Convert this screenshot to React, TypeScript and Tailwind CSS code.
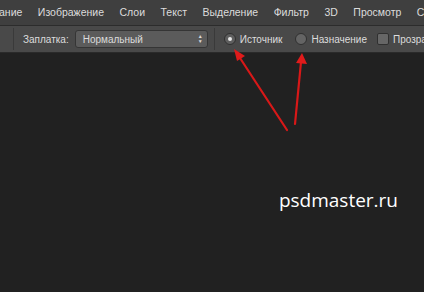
import React from 'react';

const menu = ['ание', 'Изображение', 'Слои', 'Текст', 'Выделение', 'Фильтр', '3D', 'Просмотр', 'С'];

const Arrows = () => (
  <svg className="absolute left-0 top-0" width="424" height="292" viewBox="0 0 424 292">
    <g stroke="#d81818" strokeWidth="2.2" strokeLinecap="round" fill="#e01b1b">
      <line x1="287" y1="130" x2="240" y2="58" />
      <line x1="295" y1="124" x2="301" y2="62" />
    </g>
    <polygon points="234,49 245,56 237,61" fill="#e01b1b" />
    <polygon points="302,53 307,64 296,63" fill="#e01b1b" />
  </svg>
);

const App = () => {
  return (
    <div className="relative w-[424px] h-[292px] overflow-hidden bg-[#212121] font-['Liberation_Sans',sans-serif]">
      <div className="flex h-[25px] items-center overflow-hidden bg-[#3f3f3f] text-[10.5px] text-[#dcdcdc] whitespace-nowrap">
        <div className="flex shrink-0 gap-[15.5px] -ml-[1px]">
          {menu.map(m => (
            <span key={m} className="shrink-0">{m}</span>
          ))}
        </div>
      </div>
      <div className="h-px bg-[#2c2c2c]" />
      <div className="flex h-[27px] items-center overflow-hidden bg-[#494949] text-[10px] text-[#dcdcdc] whitespace-nowrap border-b border-[#2a2a2a]">
        <div className="ml-[13px] h-[22px] w-px shrink-0 bg-[#3a3a3a]" />
        <span className="ml-[9px] shrink-0">Заплатка:</span>
        <div className="ml-[6px] flex h-[18px] w-[133px] shrink-0 items-center justify-between rounded-[3px] border border-[#353535] bg-[#5b5b5b] pl-[7px] pr-[4px]">
          <span>Нормальный</span>
          <span className="flex flex-col text-[5px] leading-[5px]">
            <span>▲</span>
            <span>▼</span>
          </span>
        </div>
        <div className="ml-[6px] h-[22px] w-px shrink-0 bg-[#3a3a3a]" />
        <div className="ml-[9px] flex h-[12px] w-[12px] shrink-0 items-center justify-center rounded-full border border-[#303030] bg-[#5e5e5e]">
          <div className="h-[4px] w-[4px] rounded-full bg-[#e8e8e8]" />
        </div>
        <span className="ml-[4px] shrink-0">Источник</span>
        <div className="ml-[13px] h-[12px] w-[12px] shrink-0 rounded-full border border-[#303030] bg-[#646464]" />
        <span className="ml-[4px] shrink-0">Назначение</span>
        <div className="ml-[10px] h-[12px] w-[12px] shrink-0 rounded-[2px] border border-[#303030] bg-[#666]" />
        <span className="ml-[4px] shrink-0">Прозрачный</span>
      </div>
      <div className="flex justify-end pr-[26px] pt-[133px]">
        <span className="font-['Open_Sans',sans-serif] text-[19px] text-white">psdmaster.ru</span>
      </div>
      <Arrows />
    </div>
  );
};

export default App;
